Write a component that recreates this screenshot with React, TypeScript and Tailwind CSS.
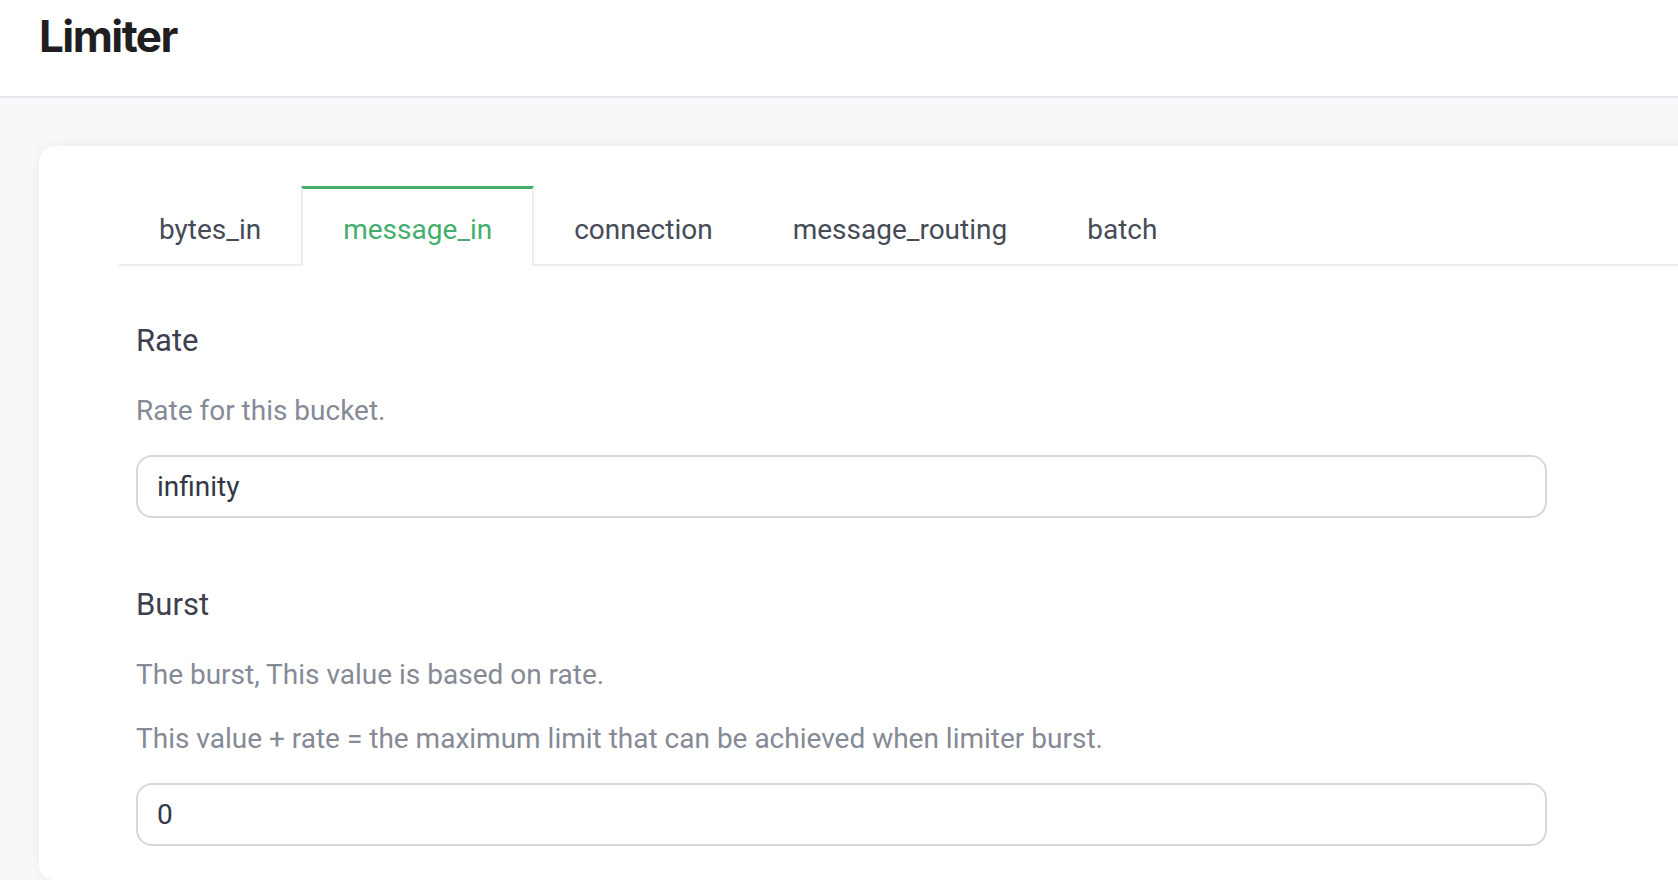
import React from "react";

const tabs = ["bytes_in", "message_in", "connection", "message_routing", "batch"];

function Field({ label, desc, value }: { label: string; desc: string[]; value: string }) {
  return (
    <div className="flex flex-col">
      <div className="text-[31px] leading-[42px] text-[#3c414d]">{label}</div>
      <div className="mt-[28px] flex flex-col gap-[22px]">
        {desc.map((d) => (
          <p key={d} className="text-[28px] leading-[42px] text-[#858a95]">
            {d}
          </p>
        ))}
      </div>
      <input
        readOnly
        value={value}
        className="mt-[23px] h-[63px] w-full rounded-[16px] border-2 border-[#d5d8de] bg-white px-[19px] text-[28px] text-[#323844] outline-none"
        style={{ fontFamily: "Roboto, sans-serif" }}
      />
    </div>
  );
}

export default function App() {
  return (
    <div className="flex h-[880px] w-full flex-col overflow-hidden bg-[#f7f8fa]" style={{ fontFamily: "Roboto, sans-serif" }}>
      <header className="flex h-[98px] shrink-0 border-b-2 border-[#e6e6ec] bg-white pl-[39px] pt-[14px]">
        <h1
          className="text-[44px] font-bold leading-[44px] tracking-[-0.035em] text-[#1f1f21]"
          style={{ fontFamily: "Inter, sans-serif" }}
        >
          Limiter
        </h1>
      </header>
      <main className="flex flex-1 pl-[39px] pt-[48px]">
        <div className="mr-[-60px] flex-1 rounded-[16px] bg-white pl-[80px] pt-[40px] shadow-[0_0_14px_rgba(20,20,60,0.05)]">
          <div className="flex border-b-2 border-[#ececf2]">
            {tabs.map((t) => {
              const active = t === "message_in";
              return (
                <div
                  key={t}
                  className={
                    active
                      ? "mb-[-2px] border-x-2 border-t-[3px] border-x-[#ebebf0] border-t-[#45ae6e] bg-white px-[40px] pb-[15px] pt-[20px] text-[28px] leading-[42px] text-[#45ae6e]"
                      : "mb-[-2px] border-t-[3px] border-transparent px-[40px] pb-[15px] pt-[20px] text-[28px] leading-[42px] text-[#464b57]"
                  }
                >
                  {t}
                </div>
              );
            })}
          </div>
          <div className="ml-[17px] flex w-[1411px] flex-col gap-[66px] pt-[54px]">
            <Field label="Rate" desc={["Rate for this bucket."]} value="infinity" />
            <Field
              label="Burst"
              desc={[
                "The burst, This value is based on rate.",
                "This value + rate = the maximum limit that can be achieved when limiter burst.",
              ]}
              value="0"
            />
          </div>
        </div>
      </main>
    </div>
  );
}
